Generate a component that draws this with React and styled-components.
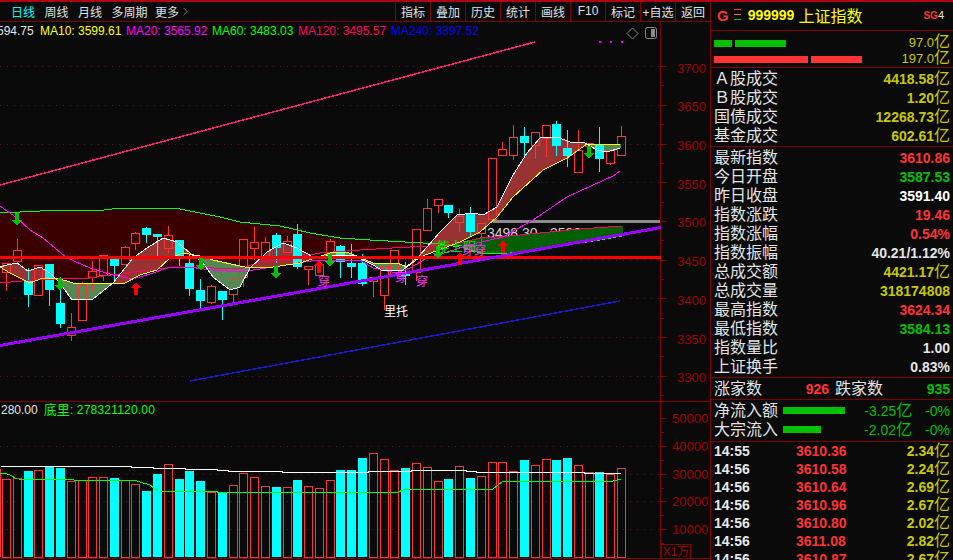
import React from "react";
import styled, { createGlobalStyle } from "styled-components";
import { ChevronRight } from "lucide-react";

const BG = "#0a0a0a";
const LINE = "#800000";
const RED = "#ff3333";
const GREEN = "#00c000";
const OLIVE = "#c8c800";
const CYAN = "#00ffff";

const LATIN = `"Liberation Sans", Arial, sans-serif`;
const CJK = `"Liberation Sans", "Noto Sans CJK SC", sans-serif`;

const GlobalStyle = createGlobalStyle`
  html, body {
    margin: 0;
    background: ${BG};
    font-family: ${CJK};
  }
`;

// [r = hollow red / c = solid cyan, wick top, body top, body bottom, wick low]
const candles = [
  ["r", 263, 263, 272, 291], ["r", 239, 250, 261, 264], ["c", 268, 280, 295, 307], ["r", 265, 265, 295, 295],
  ["c", 264, 264, 290, 306], ["c", 277, 303, 324, 328], ["r", 313, 327, 335, 341], ["r", 282, 285, 320, 320],
  ["r", 261, 271, 277, 291], ["r", 255, 255, 275, 281], ["c", 258, 258, 266, 282], ["r", 246, 247, 264, 264],
  ["r", 232, 233, 243, 250], ["c", 227, 228, 235, 243], ["c", 234, 234, 237, 256], ["r", 226, 235, 248, 253],
  ["c", 240, 240, 259, 266], ["c", 255, 263, 289, 296], ["c", 279, 290, 301, 308], ["r", 285, 286, 302, 304],
  ["c", 291, 291, 300, 320], ["r", 277, 278, 294, 303], ["r", 239, 239, 277, 287], ["r", 227, 242, 248, 260],
  ["r", 237, 242, 256, 256], ["c", 233, 235, 248, 263], ["r", 236, 241, 252, 252], ["c", 224, 234, 267, 269],
  ["r", 266, 266, 269, 285], ["r", 260, 264, 275, 275], ["r", 239, 241, 255, 258], ["c", 245, 246, 262, 278],
  ["c", 244, 263, 267, 278], ["c", 254, 263, 284, 286], ["r", 277, 277, 281, 297], ["r", 266, 266, 295, 310],
  ["r", 250, 250, 275, 275], ["c", 262, 274, 276, 285], ["r", 229, 229, 272, 281], ["r", 199, 208, 230, 230],
  ["r", 199, 199, 205, 213], ["c", 205, 205, 213, 218], ["r", 209, 216, 222, 232], ["c", 207, 213, 232, 237],
  ["r", 223, 223, 233, 245], ["r", 158, 158, 219, 219], ["r", 142, 149, 155, 155], ["r", 125, 137, 155, 160],
  ["c", 127, 136, 143, 158], ["r", 132, 132, 145, 159], ["r", 125, 125, 138, 157], ["c", 121, 124, 146, 156],
  ["c", 130, 148, 156, 167], ["r", 130, 150, 172, 173], ["r", 143, 143, 146, 146], ["c", 127, 145, 159, 172],
  ["r", 150, 150, 163, 165], ["r", 126, 136, 155, 156],
];

// top edge of each volume bar, page pixels
const volumes = [
  479, 478, 471, 470, 467, 468, 481, 480, 477, 477, 478, 480, 484, 491, 474, 464, 479, 471, 481, 492,
  492, 485, 473, 477, 486, 487, 487, 480, 486, 488, 480, 470, 470, 458, 453, 459, 470, 468, 463, 467,
  481, 479, 466, 478, 476, 462, 462, 471, 460, 465, 459, 460, 458, 465, 472, 472, 474, 468,
];

const barX = (i) => Math.round(2 + 10.79 * i);

const MA5 = [
  [0, 267], [7, 265], [17, 263], [28, 271], [40, 267], [50, 273], [60, 283], [72, 300], [93, 299], [113, 283],
  [133, 258], [147, 248], [163, 238], [177, 242], [190, 253], [203, 263], [213, 277], [230, 290], [240, 287],
  [250, 268], [267, 252], [283, 243], [297, 248], [313, 257], [340, 255], [353, 255], [373, 265], [383, 271],
  [403, 270], [420, 255], [440, 232], [457, 215], [473, 213], [483, 215], [497, 207], [513, 175], [527, 153],
  [540, 138], [557, 137], [570, 142], [585, 143], [597, 150], [607, 152], [620, 148],
];
const MA10 = [
  [0, 267], [10, 273], [20, 278], [30, 283], [43, 278], [57, 278], [73, 283], [125, 283], [140, 275], [157, 270],
  [170, 258], [183, 253], [200, 256], [213, 260], [240, 266], [250, 268], [273, 267], [300, 263], [330, 253],
  [347, 252], [373, 263], [397, 263], [407, 267], [420, 257], [460, 242], [480, 232], [497, 217], [513, 197],
  [543, 170], [567, 158], [587, 144], [620, 144],
];
const MA20 = [
  [0, 206], [17, 218], [30, 230], [43, 238], [67, 258], [90, 268], [113, 275], [133, 279], [150, 274], [167, 268],
  [187, 267], [213, 270], [240, 272], [273, 267], [317, 260], [360, 260], [373, 268], [397, 273], [410, 268],
  [427, 258], [447, 252], [477, 243], [503, 237], [533, 220], [567, 197], [593, 185], [613, 176], [620, 171],
];
const MA60 = [
  [0, 213], [40, 211], [100, 210.5], [120, 208], [175, 208], [200, 213], [220, 217], [240, 222], [280, 226],
  [310, 233], [340, 238], [370, 240], [400, 241.7], [440, 244], [465, 248], [480, 253], [510, 253], [530, 251],
  [560, 246], [600, 240], [622, 236],
];
const MA120 = [
  [0, 283], [33, 280], [90, 278], [133, 272], [167, 268], [187, 267], [240, 269], [260, 262], [290, 259],
  [320, 253], [360, 250], [400, 247.5], [440, 245.5], [455, 244], [480, 238], [510, 236], [540, 233], [580, 229],
  [622, 226],
];

const VOL_WHITE = [
  [1, 466.5], [131, 466.5], [131, 467.5], [153, 467.5], [153, 468.5], [185, 468.5], [185, 469.5], [217, 469.5],
  [217, 470.5], [228, 470.5], [228, 471.5], [282, 471.5], [282, 472.5], [368, 472.5], [368, 471.5], [411, 471.5],
  [411, 470.5], [466, 470.5], [466, 471.5], [476, 471.5], [476, 472.5], [584, 472.5], [584, 473.5], [621, 473.5],
];
const VOL_GREEN = [
  [0, 473.5], [6, 473.5], [10, 475], [17, 479], [73, 479.5], [75, 480.5], [137, 481], [140, 482], [150, 485],
  [158, 491], [217, 491.5], [218, 492.5], [397, 492.5], [405, 489], [493, 489], [503, 481], [613, 481], [621, 479],
];

const interp = (pts, x) => {
  for (let i = 1; i < pts.length; i++) {
    if (x <= pts[i][0]) {
      const [x0, y0] = pts[i - 1];
      const [x1, y1] = pts[i];
      return y0 + ((y1 - y0) * (x - x0)) / (x1 - x0);
    }
  }
  return pts[pts.length - 1][1];
};

// one pixel column at a time, split by which of the two curves is on top
const bandPaths = (a, b, end) => {
  let over = "";
  let under = "";
  for (let x = 0; x <= end; x++) {
    const y1 = interp(a, x);
    const y2 = interp(b, x);
    const seg = `M${x + 0.5} ${y1}V${y2}`;
    if (y1 < y2) over += seg;
    else under += seg;
  }
  return [over, under];
};

const toPoints = (pts) => pts.map((p) => p.join(",")).join(" ");

const gridY = (k) => 66.6 + 38.7 * k;
const priceLabels = [3700, 3650, 3600, 3550, 3500, 3450, 3400, 3350, 3300];
const volLabels = [
  [50000, 418],
  [40000, 446],
  [30000, 474],
  [20000, 501],
  [10000, 529],
];

const downArrows = [[17, 213], [60, 278], [201, 258], [276, 266], [330, 254], [438, 246], [589, 146]];
const upArrows = [[136, 282], [319, 260], [460, 252], [503, 240]];

const Frame = styled.div`
  width: 953px;
  height: 560px;
  box-sizing: border-box;
  border-top: 2px solid #b00010;
  background: ${BG};
  overflow: hidden;
  display: grid;
  grid-template-columns: 710px 243px;
`;

const LeftColumn = styled.div`
  display: flex;
  flex-direction: column;
`;

const Toolbar = styled.div`
  height: 20px;
  box-sizing: border-box;
  border-bottom: 1px solid ${LINE};
  display: flex;
  align-items: stretch;
  padding-left: 11px;
  gap: 9.5px;
  font-size: 12px;
  color: #e0e0e0;
`;

const Period = styled.div`
  display: flex;
  align-items: center;
  padding-bottom: 1px;
  color: ${(p) => (p.$active ? CYAN : "#e0e0e0")};
`;

const MorePeriod = styled(Period)`
  margin-left: -2px;
`;

const Tabs = styled.div`
  margin-left: auto;
  display: flex;
`;

const Tab = styled.div`
  width: 35px;
  box-sizing: border-box;
  border-left: 1px solid ${LINE};
  padding-bottom: 1px;
  display: flex;
  align-items: center;
  justify-content: center;
  white-space: nowrap;
`;

const MainPane = styled.div`
  position: relative;
  height: 380px;
  box-sizing: border-box;
  border-bottom: 1px solid ${LINE};
`;

const SubPane = styled.div`
  position: relative;
  height: 157px;
  box-sizing: border-box;
  border-bottom: 1px solid ${LINE};
`;

const Chart = styled.svg`
  display: block;
  font-family: ${CJK};
`;

const Legend = styled.div`
  position: absolute;
  top: 2px;
  left: -3px;
  display: flex;
  font: 12px/14px ${LATIN};
  white-space: nowrap;
`;

const LegendItem = styled.span`
  color: ${(p) => p.$color};
  width: ${(p) => p.$w}px;
`;

const SubLegend = styled.div`
  position: absolute;
  top: 1px;
  left: 1px;
  display: flex;
  align-items: center;
  font-size: 12px;
  line-height: 14px;
  white-space: nowrap;
`;

const SubValue = styled.span`
  color: ${(p) => p.$color};
  margin-right: 6px;
  letter-spacing: ${(p) => p.$spacing || 0}px;
`;

const SubLabel = styled.span`
  color: #00ff00;
  font-size: 13px;
`;

const UnitBox = styled.div`
  position: absolute;
  right: 19px;
  bottom: 0;
  width: 30px;
  height: 14px;
  box-sizing: border-box;
  border: 1px solid ${LINE};
  border-bottom: 0;
  color: #a00000;
  font-size: 12px;
  line-height: 14px;
  text-align: center;
`;

const Panel = styled.div`
  border-left: 1px solid ${LINE};
  display: flex;
  flex-direction: column;
  color: #e4e4e4;
  font-size: 16px;
`;

const Header = styled.div`
  height: 29px;
  box-sizing: border-box;
  border-bottom: 1px solid ${LINE};
  padding: 0 9px 2px 6px;
  display: flex;
  align-items: center;
  font-family: ${CJK};
`;

const StockFlag = styled.span`
  color: ${RED};
  font: bold 15px ${LATIN};
  margin-right: 5px;
`;

const StockCode = styled.span`
  color: #ffff00;
  font: bold 14px ${LATIN};
  margin: 0 4px 0 7px;
`;

const StockName = styled.span`
  color: #ffff00;
  font-size: 16px;
`;

const Badge = styled.span`
  margin-left: auto;
  color: ${RED};
  font: bold 10px ${LATIN};

  b {
    color: #e4e4e4;
    font-weight: normal;
    font-size: 11px;
  }
`;

const Section = styled.div`
  border-bottom: 1px solid ${LINE};
  padding: ${(p) => p.$pad || "0"};
`;

const LoadRow = styled.div`
  height: 16px;
  padding: 0 3px;
  display: flex;
  align-items: flex-start;
`;

const LoadBars = styled.div`
  display: flex;
  gap: 3px;
  margin-top: 6px;
`;

const LoadBar = styled.div`
  height: 7px;
  width: ${(p) => p.$w}px;
  background: ${(p) => p.$color};
`;

const LoadValue = styled.span`
  margin-left: auto;
  color: ${OLIVE};
  font-size: 13px;
  line-height: 16px;
  height: 16px;
`;

const Unit = styled.span`
  font-family: ${CJK};
  font-size: 16px;
  font-weight: normal;
  line-height: 16px;
  color: ${(p) => p.$color || OLIVE};
`;

const Row = styled.div`
  height: 19px;
  padding: 0 3px;
  display: flex;
  align-items: center;
  justify-content: space-between;
  line-height: 19px;
  white-space: nowrap;
`;

const Value = styled.span`
  font: bold 14px ${LATIN};
  color: ${(p) => p.$color};
`;

const BreadthRow = styled(Row)`
  height: 21px;
  justify-content: flex-start;
`;

const BreadthCount = styled(Value)`
  margin-left: auto;
`;

const BreadthLabel = styled.span`
  margin-left: 6px;
`;

const FlowBar = styled.div`
  height: 7px;
  width: ${(p) => p.$w}px;
  background: ${GREEN};
  margin: 0 auto 0 5px;
`;

const FlowAmount = styled.span`
  width: 68px;
  text-align: right;
  font: 14px ${LATIN};
  color: ${GREEN};
`;

const FlowPct = styled.span`
  width: 38px;
  text-align: right;
  font: 14px ${LATIN};
  color: ${GREEN};
`;

const TickRow = styled.div`
  height: 18px;
  padding: 0 3px;
  display: grid;
  grid-template-columns: 82px 54px 1fr;
  align-items: center;
  font: bold 14px/18px ${LATIN};
  color: #e8e8e8;
`;

const TickPrice = styled.span`
  color: ${RED};
`;

const TickAmount = styled.span`
  text-align: right;
  color: ${OLIVE};
`;

const periods = ["周线", "月线", "多周期"];
const tabs = ["指标", "叠加", "历史", "统计", "画线", "F10", "标记", "+自选", "返回"];

const turnover = [
  ["Ａ股成交", "4418.58"],
  ["Ｂ股成交", "1.20"],
  ["国债成交", "12268.73"],
  ["基金成交", "602.61"],
];

const stats = [
  ["最新指数", "3610.86", RED],
  ["今日开盘", "3587.53", GREEN],
  ["昨日收盘", "3591.40", "#fff"],
  ["指数涨跌", "19.46", RED],
  ["指数涨幅", "0.54%", RED],
  ["指数振幅", "40.21/1.12%", "#e4e4e4"],
  ["总成交额", "4421.17", OLIVE, true],
  ["总成交量", "318174808", OLIVE],
  ["最高指数", "3624.34", RED],
  ["最低指数", "3584.13", GREEN],
  ["指数量比", "1.00", "#e4e4e4"],
  ["上证换手", "0.83%", "#e4e4e4"],
];

const flows = [
  ["净流入额", 62, "-3.25"],
  ["大宗流入", 38, "-2.02"],
];

const ticks = [
  ["14:55", "3610.36", "2.34"],
  ["14:56", "3610.58", "2.24"],
  ["14:56", "3610.64", "2.69"],
  ["14:56", "3610.96", "2.67"],
  ["14:56", "3610.80", "2.02"],
  ["14:56", "3611.08", "2.82"],
  ["14:56", "3610.87", "2.67"],
];

function DownArrow({ x, y }) {
  return <path d={`M${x - 2} ${y}h4v7h3.5l-5.5 6l-5.5 -6h3.5z`} fill="#00c000" shapeRendering="crispEdges" />;
}

function UpArrow({ x, y }) {
  return <path d={`M${x} ${y}l5.5 6h-3.5v7h-4v-7h-3.5z`} fill="#ff0000" shapeRendering="crispEdges" />;
}

function Candle({ index, data }) {
  const [kind, high, top, bottom, low] = data;
  const x = barX(index);
  const cx = x + 4.5;
  const color = kind === "c" ? CYAN : RED;
  return (
    <g shapeRendering="crispEdges">
      <line x1={cx} x2={cx} y1={high} y2={top} stroke={color} />
      <line x1={cx} x2={cx} y1={bottom} y2={low} stroke={color} />
      {kind === "c" ? (
        <rect x={x} y={top} width={9} height={bottom - top} fill={CYAN} />
      ) : (
        <rect x={x + 0.5} y={top + 0.5} width={8} height={bottom - top} fill="none" stroke={RED} />
      )}
    </g>
  );
}

function PriceChart() {
  const [darkRed, darkGreen] = bandPaths(MA60, MA120, 622);
  const [upFill, downFill] = bandPaths(MA5, MA10, 620);
  return (
    <Chart width="710" height="379" viewBox="0 22 710 379">
      {priceLabels.map((label, k) => (
        <g key={label}>
          <line x1="0" x2="661" y1={gridY(k)} y2={gridY(k)} stroke="#5a1414" strokeDasharray="1 6" shapeRendering="crispEdges" />
          <line x1="661" x2="667" y1={gridY(k)} y2={gridY(k)} stroke={LINE} shapeRendering="crispEdges" />
          <line x1="661" x2="664" y1={gridY(k) + 19.3} y2={gridY(k) + 19.3} stroke={LINE} shapeRendering="crispEdges" />
          <text x="677" y={gridY(k) + 6} fontSize="13" fill="#a00000" fontFamily={LATIN}>
            {label}
          </text>
        </g>
      ))}
      <line x1="660.5" x2="660.5" y1="22" y2="401" stroke={LINE} />

      <g shapeRendering="crispEdges" strokeWidth="1.5">
        <line x1="0" y1="185" x2="535" y2="42" stroke="#ff1a75" />
        <line x1="190" y1="381" x2="620" y2="301" stroke="#1a1acc" />
      </g>
      <rect x="493" y="220" width="167" height="3" fill="#8c8c8c" />
      <text x="487" y="238" fontSize="14" fill="#d0d0d0" fontFamily={LATIN}>
        3498.30 - 3592.44
      </text>

      <path d={darkRed} stroke="#3a0000" fill="none" shapeRendering="crispEdges" />
      <path d={darkGreen} stroke="#006000" fill="none" shapeRendering="crispEdges" />
      <path d={upFill} stroke="#993333" fill="none" shapeRendering="crispEdges" />
      <path d={downFill} stroke="#558855" fill="none" shapeRendering="crispEdges" />

      {candles.map((c, i) => (
        <Candle key={i} index={i} data={c} />
      ))}

      <g fill="none" shapeRendering="crispEdges">
        <polyline points={toPoints(MA60)} stroke="#00ff00" />
        <polyline points={toPoints(MA120)} stroke="#ff0066" />
        <polyline points={toPoints(MA20)} stroke="#ff00ff" />
        <polyline points={toPoints(MA10)} stroke="#ffff00" />
        <polyline points={toPoints(MA5)} stroke="#ffffff" />
      </g>

      <rect x="0" y="256" width="661" height="3" fill="#ff0000" />
      <line x1="0" y1="345.5" x2="661" y2="227.5" stroke="#9900ff" strokeWidth="3" shapeRendering="crispEdges" />

      {downArrows.map(([x, y]) => (
        <DownArrow key={x} x={x} y={y} />
      ))}
      {upArrows.map(([x, y]) => (
        <UpArrow key={x} x={x} y={y} />
      ))}

      <text x="318" y="286" fontSize="12" fill="#ff33ff">穿</text>
      <text x="395" y="282" fontSize="12" fill="#ff33ff">穿</text>
      <text x="416" y="286" fontSize="12" fill="#ff33ff">穿</text>
      <text x="384" y="316" fontSize="12" fill="#ffffff">里托</text>
      <text x="437" y="251" fontSize="13" fill="#00e000">能上阳</text>
      <text x="462" y="255" fontSize="12" fill="#ff33ff">穿穿</text>

      <rect x="599" y="41" width="2" height="2" fill="#ff00ff" />
      <rect x="610" y="41" width="2" height="2" fill="#ff00ff" />
      <rect x="621" y="41" width="2" height="2" fill="#ff00ff" />
      <path d="M632.5 28l5.5 5.5l-5.5 5.5l-5.5 -5.5z" fill="none" stroke="#8a8a8a" />
      <rect x="645.5" y="27.5" width="11" height="11" rx="2" fill="none" stroke="#8a8a8a" />
      <rect x="651" y="29" width="4" height="8" fill="#8a8a8a" />
    </Chart>
  );
}

function VolumeChart() {
  return (
    <Chart width="710" height="156" viewBox="0 402 710 156">
      {volLabels.map(([label, y]) => (
        <g key={label} shapeRendering="crispEdges">
          {label !== 50000 && (
            <line x1="0" x2="661" y1={y} y2={y} stroke="#5a1414" strokeDasharray="1 6" />
          )}
          <line x1="661" x2="667" y1={y} y2={y} stroke={LINE} />
          <line x1="661" x2="664" y1={y + 14} y2={y + 14} stroke={LINE} />
          <text x="672" y={y + 5} fontSize="13" fill="#a00000" fontFamily={LATIN}>
            {label}
          </text>
        </g>
      ))}
      <line x1="660.5" x2="660.5" y1="402" y2="558" stroke={LINE} />
      {volumes.map((top, i) =>
        candles[i][0] === "c" ? (
          <rect key={i} x={barX(i)} y={top} width="9" height={557 - top} fill={CYAN} />
        ) : (
          <rect
            key={i}
            x={barX(i) + 0.5}
            y={top + 0.5}
            width="8"
            height={556.5 - top}
            fill="none"
            stroke={RED}
            shapeRendering="crispEdges"
          />
        )
      )}
      <rect x="0" y="469" width="1" height="88" fill={RED} />
      <polyline points={toPoints(VOL_WHITE)} fill="none" stroke="#fff" shapeRendering="crispEdges" />
      <polyline points={toPoints(VOL_GREEN)} fill="none" stroke="#00ff00" shapeRendering="crispEdges" />
    </Chart>
  );
}

export default function App() {
  return (
    <>
      <GlobalStyle />
      <Frame>
        <LeftColumn>
          <Toolbar>
            <Period $active>日线</Period>
            {periods.map((p) => (
              <Period key={p}>{p}</Period>
            ))}
            <MorePeriod>
              更多
              <ChevronRight size={13} strokeWidth={1} />
            </MorePeriod>
            <Tabs>
              {tabs.map((t) => (
                <Tab key={t}>{t}</Tab>
              ))}
            </Tabs>
          </Toolbar>
          <MainPane>
            <PriceChart />
            <Legend>
              <LegendItem $color="#e4e4e4" $w={43}>594.75</LegendItem>
              <LegendItem $color="#ffff00" $w={86}>MA10: 3599.61</LegendItem>
              <LegendItem $color="#ff00ff" $w={86}>MA20: 3565.92</LegendItem>
              <LegendItem $color="#00ff00" $w={86}>MA60: 3483.03</LegendItem>
              <LegendItem $color="#ff0066" $w={93}>MA120: 3495.57</LegendItem>
              <LegendItem $color="#0000ff" $w={93}>MA240: 3397.52</LegendItem>
            </Legend>
          </MainPane>
          <SubPane>
            <VolumeChart />
            <SubLegend>
              <SubValue $color="#e4e4e4">280.00</SubValue>
              <SubLabel>底里:</SubLabel>
              <SubValue $color="#00ff00" $spacing={0.2}>&nbsp;278321120.00</SubValue>
            </SubLegend>
            <UnitBox>X1万</UnitBox>
          </SubPane>
        </LeftColumn>

        <Panel>
          <Header>
            <StockFlag>G</StockFlag>
            <svg width="7" height="12" viewBox="0 0 7 12">
              <rect x="0" y="0" width="7" height="1" fill="#ff3333" />
              <rect x="0" y="5" width="7" height="1" fill="#ff6666" />
              <rect x="0" y="10" width="7" height="1" fill="#00c000" />
            </svg>
            <StockCode>999999</StockCode>
            <StockName>上证指数</StockName>
            <Badge>
              SG<b>4</b>
            </Badge>
          </Header>

          <Section $pad="3px 0 1px">
            <LoadRow>
              <LoadBars>
                <LoadBar $w={18} $color={GREEN} />
                <LoadBar $w={51} $color={GREEN} />
              </LoadBars>
              <LoadValue>
                97.0<Unit>亿</Unit>
              </LoadValue>
            </LoadRow>
            <LoadRow>
              <LoadBars>
                <LoadBar $w={94} $color={RED} />
                <LoadBar $w={51} $color={RED} />
              </LoadBars>
              <LoadValue>
                197.0<Unit>亿</Unit>
              </LoadValue>
            </LoadRow>
          </Section>

          <Section $pad="1px 0 1px">
            {turnover.map(([label, value]) => (
              <Row key={label}>
                {label}
                <Value $color={OLIVE}>
                  {value}
                  <Unit>亿</Unit>
                </Value>
              </Row>
            ))}
          </Section>

          <Section $pad="1px 0 1px">
            {stats.map(([label, value, color, unit]) => (
              <Row key={label}>
                {label}
                <Value $color={color}>
                  {value}
                  {unit && <Unit>亿</Unit>}
                </Value>
              </Row>
            ))}
          </Section>

          <Section>
            <BreadthRow>
              <span>涨家数</span>
              <BreadthCount $color={RED}>926</BreadthCount>
              <BreadthLabel>跌家数</BreadthLabel>
              <BreadthCount $color={GREEN}>935</BreadthCount>
            </BreadthRow>
          </Section>

          <Section $pad="1px 0 2px">
            {flows.map(([label, width, amount]) => (
              <Row key={label}>
                {label}
                <FlowBar $w={width} />
                <FlowAmount>
                  {amount}
                  <Unit $color={GREEN}>亿</Unit>
                </FlowAmount>
                <FlowPct>-0%</FlowPct>
              </Row>
            ))}
          </Section>

          {ticks.map(([time, price, amount], i) => (
            <TickRow key={i}>
              {time}
              <TickPrice>{price}</TickPrice>
              <TickAmount>
                {amount}
                <Unit>亿</Unit>
              </TickAmount>
            </TickRow>
          ))}
        </Panel>
      </Frame>
    </>
  );
}
